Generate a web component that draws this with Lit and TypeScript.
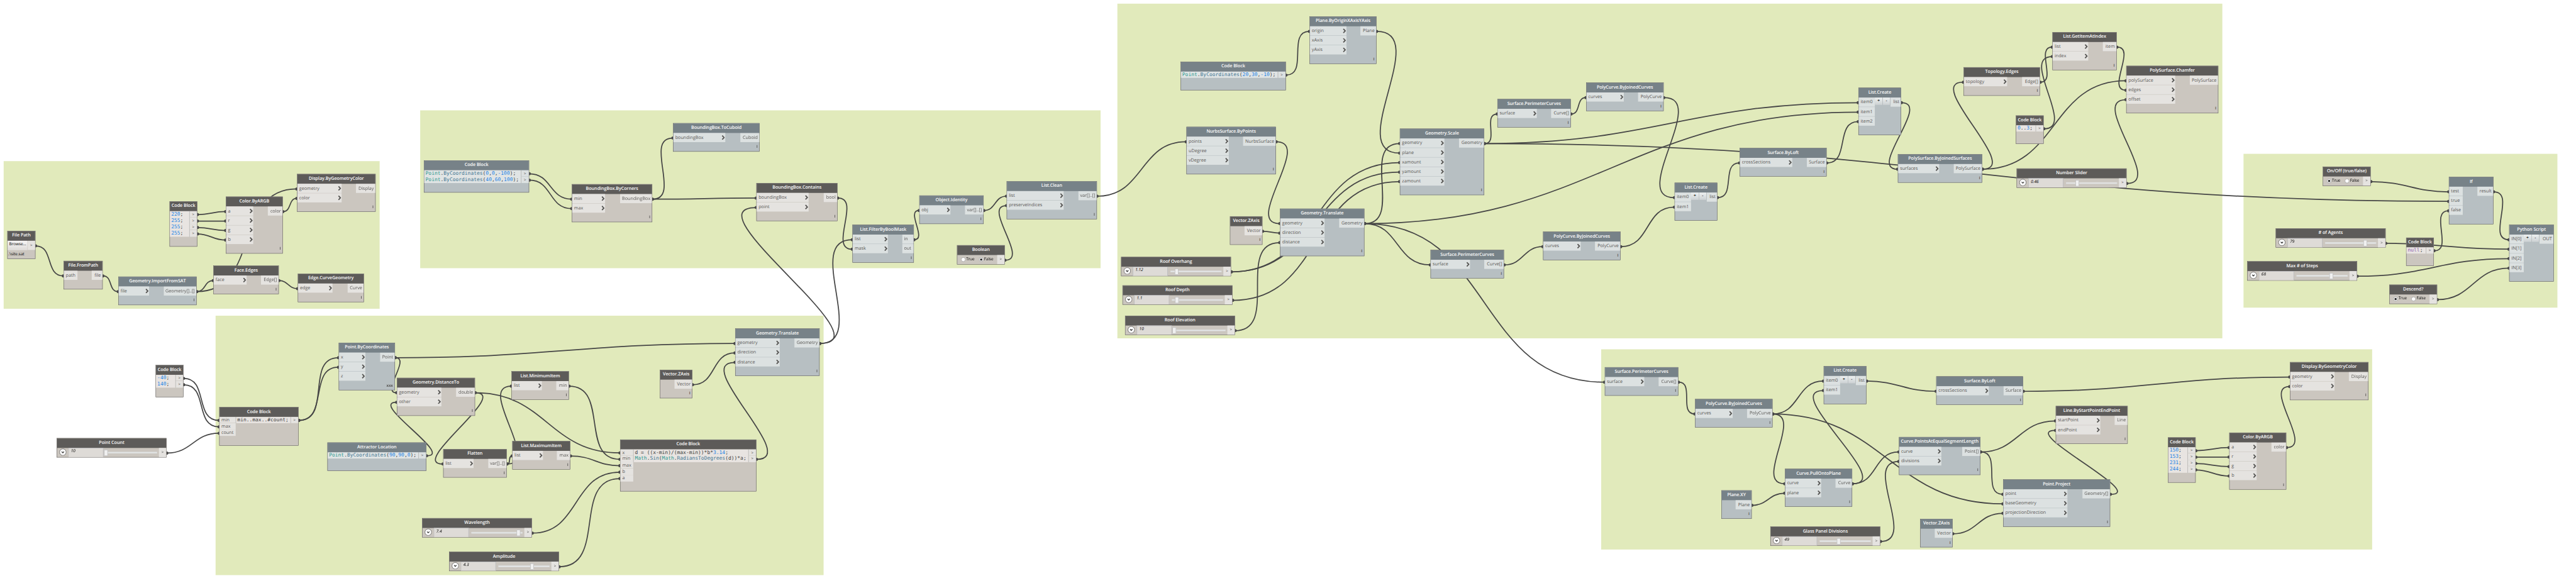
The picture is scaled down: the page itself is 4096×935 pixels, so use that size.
import { LitElement, html, svg, css, nothing, TemplateResult } from "lit";
import { customElement, property } from "lit/decorators.js";
import { classMap } from "lit/directives/class-map.js";
import { styleMap } from "lit/directives/style-map.js";

type Token = [kind: string, text: string];

interface GraphNode {
  id: string;
  kind: "function" | "code" | "slider" | "bool" | "file";
  title: string;
  x: number;
  y: number;
  w: number;
  h: number;
  blue?: boolean;
  ins?: string[];
  outs?: string[];
  inW?: number;
  outW?: number;
  plain?: boolean;
  variadic?: boolean;
  lacing?: string;
  lines?: Token[][];
  outCount?: number;
  value?: string;
  thumb?: number;
  on?: boolean;
}

const HEADER = 27;
const ROW = 26;
const CODE_ROW = 17.6;

/* ---------- node factories ---------- */

const fn = (
  id: string, title: string, x: number, y: number, right: number, blue: boolean,
  ins: string[], inW: number, outs: string[], outW: number, extra: Partial<GraphNode> = {},
): GraphNode => ({
  id, kind: "function", title, x, y, w: right - x,
  h: HEADER + ROW * Math.max(ins.length, outs.length) + 25,
  blue, ins, inW, outs, outW, lacing: "I", ...extra,
});

const code = (
  id: string, x: number, y: number, right: number, h: number, blue: boolean,
  lines: Token[][], extra: Partial<GraphNode> = {},
): GraphNode => ({
  id, kind: "code", title: "Code Block", x, y, w: right - x, h, blue, lines,
  outCount: lines.length, ...extra,
});

const slider = (id: string, title: string, x: number, y: number, value: string, thumb: number): GraphNode =>
  ({ id, kind: "slider", title, x, y, w: 301, h: 53, value, thumb });

const bool = (id: string, title: string, x: number, y: number, on: boolean): GraphNode =>
  ({ id, kind: "bool", title, x, y, w: 131, h: 53, on });

const num = (n: string): Token[] => [["num", n], ["op", ";"]];
const pointBy = (...coords: string[]): Token[] => {
  const out: Token[] = [["cls", "Point"], ["op", "."], ["fn", "ByCoordinates"], ["op", "("]];
  coords.forEach((c, i) => {
    if (i) out.push(["op", ","]);
    out.push(["num", c]);
  });
  out.push(["op", ");"]);
  return out;
};

const perimeter = (id: string, x: number, y: number) =>
  fn(id, "Surface.PerimeterCurves", x, y, x + 201, true, ["surface"], 107, ["Curve[]"], 53);
const polycurve = (id: string, x: number, y: number) =>
  fn(id, "PolyCurve.ByJoinedCurves", x, y, x + 212, true, ["curves"], 102, ["PolyCurve"], 69);
const listCreate = (id: string, x: number, y: number, n: number) =>
  fn(id, "List.Create", x, y, x + 117, true,
    Array.from({ length: n }, (_, i) => `item${i}`), 44.5, ["list"], 28,
    { plain: true, variadic: true, lacing: "" });
const loft = (id: string, x: number, y: number) =>
  fn(id, "Surface.ByLoft", x, y, x + 238, true, ["crossSections"], 143, ["Surface"], 53);
const translate = (id: string, x: number, y: number) =>
  fn(id, "Geometry.Translate", x, y, x + 231, true, ["geometry", "direction", "distance"], 121, ["Geometry"], 68);
const zAxis = (id: string, x: number, y: number, blue = false) =>
  fn(id, "Vector.ZAxis", x, y, x + 89, blue, [], 0, ["Vector"], 48);
const argb = (id: string, x: number, y: number) =>
  fn(id, "Color.ByARGB", x, y, x + 156, false, ["a", "r", "g", "b"], 74, ["color"], 40);
const display = (id: string, x: number, y: number) =>
  fn(id, "Display.ByGeometryColor", x, y, x + 215, false, ["geometry", "color"], 121, ["Display"], 53);

const GROUPS: [number, number, number, number][] = [
  [10, 441, 1039, 845],
  [1150, 302, 3012, 734],
  [590, 864, 2254, 1574],
  [3058, 10, 6082, 926],
  [6140, 421, 6999, 842],
  [4382, 956, 6492, 1504],
];

const NODES: GraphNode[] = [
  { id: "file", kind: "file", title: "File Path", x: 20, y: 632, w: 77, h: 77 },
  fn("fromPath", "File.FromPath", 174, 714, 281, false, ["path"], 37, ["file"], 29, { plain: true, lacing: "" }),
  fn("sat", "Geometry.ImportFromSAT", 324, 757, 538, true, ["file"], 83, ["Geometry[]..[]"], 89),
  code("argbA", 464, 551, 540, 124, false, [num("220"), num("255"), num("255"), num("255")]),
  argb("colorA", 618, 538),
  fn("faceEdges", "Face.Edges", 584, 727, 763, false, ["face"], 90, ["Edge[]"], 48),
  display("displayA", 813, 476),
  fn("edgeCurve", "Edge.CurveGeometry", 815, 749, 996, false, ["edge"], 94, ["Curve"], 44),

  code("range", 426, 999, 502, 88, false, [num("-40"), num("140")]),
  code("series", 600, 1114, 817, 106, false, [[["op", "min..max..#count;"]]], { ins: ["min", "max", "count"], inW: 44 }),
  slider("count", "Point Count", 155, 1199, "10", 130),

  code("corners", 1160, 439, 1448, 88, true, [pointBy("0", "0", "-100"), pointBy("40", "60", "100")]),
  fn("byCorners", "BoundingBox.ByCorners", 1565, 504, 1785, false, ["min", "max"], 90, ["BoundingBox"], 87),
  fn("cuboid", "BoundingBox.ToCuboid", 1842, 337, 2079, true, ["boundingBox"], 142, ["Cuboid"], 52),
  fn("contains", "BoundingBox.Contains", 2070, 501, 2292, false, ["boundingBox", "point"], 142, ["bool"], 37),
  fn("mask", "List.FilterByBoolMask", 2333, 615, 2501, true, ["list", "mask"], 96, ["in", "out"], 31),
  fn("identity", "Object.Identity", 2516, 535, 2692, true, ["obj"], 84, ["var[]..[]"], 50),
  fn("clean", "List.Clean", 2755, 496, 3002, true, ["list", "preserveIndices"], 155, ["var[]..[]"], 50),
  bool("boolean", "Boolean", 2619, 671, false),

  fn("point", "Point.ByCoordinates", 927, 938, 1081, true, ["x", "y", "z"], 72, ["Point"], 40, { lacing: "xxx" }),
  fn("distance", "Geometry.DistanceTo", 1086, 1034, 1300, false, ["geometry", "other"], 121, ["double"], 51),
  fn("minItem", "List.MinimumItem", 1400, 1016, 1557, false, ["list"], 82, ["min"], 34),
  code("attractor", 896, 1211, 1167, 78, true, [pointBy("90", "90", "0")], { title: "Attractor Location" }),
  fn("flatten", "Flatten", 1213, 1229, 1387, false, ["list"], 82, ["var[]..[]"], 50),
  fn("maxItem", "List.MaximumItem", 1402, 1207, 1561, false, ["list"], 83, ["max"], 36),
  slider("wavelength", "Wavelength", 1155, 1418, "7.4", 259),
  slider("amplitude", "Amplitude", 1229, 1510, "4.3", 222),
  translate("translateA", 2012, 899),
  zAxis("zA", 1806, 1012),
  code("wave", 1697, 1203, 2070, 142, false, [
    [["op", "d = ((x-min)/(max-min))*b*"], ["num", "3.14"], ["op", ";"]],
    [["cls", "Math"], ["op", "."], ["fn", "Sin"], ["op", "("], ["cls", "Math"], ["op", "."], ["fn", "RadiansToDegrees"], ["op", "(d))*a;"]],
  ], { ins: ["x", "min", "max", "b", "a"], inW: 35 }),

  fn("plane", "Plane.ByOriginXAxisYAxis", 3584, 45, 3767, true, ["origin", "xAxis", "yAxis"], 100, ["Plane"], 43),
  code("origin", 3231, 169, 3519, 78, true, [pointBy("20", "30", "-10")]),
  fn("nurbs", "NurbsSurface.ByPoints", 3247, 347, 3492, true, ["points", "uDegree", "vDegree"], 115, ["NurbsSurface"], 89),
  translate("translateB", 3503, 571),
  zAxis("zB", 3366, 592),
  slider("overhang", "Roof Overhang", 3068, 703, "1.12", 147),
  slider("depth", "Roof Depth", 3072, 781, "1.1", 144),
  slider("elevation", "Roof Elevation", 3079, 864, "10", 130),
  fn("scale", "Geometry.Scale", 3831, 352, 4062, true, ["geometry", "plane", "xamount", "yamount", "zamount"], 121, ["Geometry"], 68),
  perimeter("perimA", 4098, 271),
  polycurve("polyA", 4341, 226),
  perimeter("perimB", 3915, 684),
  polycurve("polyB", 4223, 634),
  listCreate("listA", 4583, 500, 2),
  listCreate("listB", 5086, 240, 3),
  loft("loftA", 4761, 405),
  fn("polySurface", "PolySurface.ByJoinedSurfaces", 5194, 422, 5425, true, ["surfaces"], 112, ["PolySurface"], 77),
  fn("topology", "Topology.Edges", 5374, 184, 5583, false, ["topology"], 118, ["Edge[]"], 48),
  fn("getItem", "List.GetItemAtIndex", 5617, 88, 5793, false, ["list", "index"], 97, ["item"], 37),
  fn("chamfer", "PolySurface.Chamfer", 5819, 180, 6071, false, ["polySurface", "edges", "offset"], 133, ["PolySurface"], 77),
  code("indices", 5517, 316, 5593, 78, false, [[["num", "0"], ["op", ".."], ["num", "3"], ["op", ";"]]]),
  slider("number", "Number Slider", 5519, 461, "0.46", 161),

  bool("onOff", "On/Off (true/false)", 6357, 456, true),
  fn("if", "If", 6702, 484, 6824, true, ["test", "true", "false"], 37, ["result"], 43, { plain: true, lacing: "" }),
  slider("agents", "# of Agents", 6228, 625, "79", 240),
  code("null", 6585, 650, 6661, 78, false, [[["kw", "null"], ["op", ";"]]]),
  slider("steps", "Max # of Steps", 6150, 715, "68", 225),
  bool("descend", "Descend?", 6539, 779, true),
  fn("python", "Python Script", 6867, 615, 6989, true, ["IN[0]", "IN[1]", "IN[2]", "IN[3]"], 40, ["OUT"], 38,
    { plain: true, variadic: true, lacing: "" }),

  perimeter("perimC", 4392, 1005),
  polycurve("polyC", 4639, 1092),
  listCreate("listC", 4991, 1002, 2),
  loft("loftB", 5299, 1030),
  fn("points", "Curve.PointsAtEqualSegmentLength", 5197, 1196, 5420, true, ["curve", "divisions"], 115, ["Point[]"], 49),
  fn("pull", "Curve.PullOntoPlane", 4885, 1283, 5069, true, ["curve", "plane"], 98, ["Curve"], 45),
  fn("planeXY", "Plane.XY", 4711, 1342, 4794, true, [], 0, ["Plane"], 43),
  slider("divisions", "Glass Panel Divisions", 4845, 1441, "49", 182),
  zAxis("zC", 5255, 1420, true),
  fn("line", "Line.ByStartPointEndPoint", 5626, 1111, 5823, false, ["startPoint", "endPoint"], 121, ["Line"], 35),
  fn("project", "Point.Project", 5482, 1312, 5775, true, ["point", "baseGeometry", "projectionDirection"], 175, ["Geometry[]"], 75),
  code("argbB", 5933, 1197, 6009, 124, false, [num("150"), num("153"), num("231"), num("244")]),
  argb("colorB", 6101, 1184),
  display("displayB", 6267, 991),
];

/* source, output index, target, input index */
const WIRES: [string, number, string, number][] = [
  ["file", 0, "fromPath", 0], ["fromPath", 0, "sat", 0], ["sat", 0, "faceEdges", 0], ["sat", 0, "displayA", 0],
  ["argbA", 0, "colorA", 0], ["argbA", 1, "colorA", 1], ["argbA", 2, "colorA", 2], ["argbA", 3, "colorA", 3],
  ["colorA", 0, "displayA", 1], ["faceEdges", 0, "edgeCurve", 0],
  ["range", 0, "series", 0], ["range", 1, "series", 1], ["count", 0, "series", 2],
  ["series", 0, "point", 0], ["series", 0, "point", 1],
  ["point", 0, "translateA", 0], ["point", 0, "distance", 0], ["attractor", 0, "distance", 1],
  ["distance", 0, "wave", 0], ["distance", 0, "flatten", 0], ["flatten", 0, "maxItem", 0], ["flatten", 0, "minItem", 0],
  ["minItem", 0, "wave", 1], ["maxItem", 0, "wave", 2], ["wavelength", 0, "wave", 3], ["amplitude", 0, "wave", 4],
  ["wave", 1, "translateA", 2], ["zA", 0, "translateA", 1], ["translateA", 0, "contains", 1], ["translateA", 0, "mask", 0],
  ["corners", 0, "byCorners", 0], ["corners", 1, "byCorners", 1], ["byCorners", 0, "cuboid", 0], ["byCorners", 0, "contains", 0],
  ["contains", 0, "mask", 1], ["mask", 0, "identity", 0], ["identity", 0, "clean", 0], ["boolean", 0, "clean", 1],
  ["clean", 0, "nurbs", 0],
  ["origin", 0, "plane", 0], ["plane", 0, "scale", 1], ["nurbs", 0, "translateB", 0], ["zB", 0, "translateB", 1],
  ["elevation", 0, "translateB", 2], ["overhang", 0, "scale", 2], ["overhang", 0, "scale", 3], ["depth", 0, "scale", 4],
  ["translateB", 0, "scale", 0], ["translateB", 0, "listB", 1], ["translateB", 0, "perimB", 0], ["translateB", 0, "perimC", 0],
  ["scale", 0, "perimA", 0], ["scale", 0, "listB", 0], ["scale", 0, "if", 1],
  ["perimA", 0, "polyA", 0], ["polyA", 0, "listA", 0], ["perimB", 0, "polyB", 0], ["polyB", 0, "listA", 1],
  ["listA", 0, "loftA", 0], ["loftA", 0, "listB", 2], ["listB", 0, "polySurface", 0],
  ["polySurface", 0, "topology", 0], ["polySurface", 0, "chamfer", 0], ["topology", 0, "getItem", 0],
  ["indices", 0, "getItem", 1], ["getItem", 0, "chamfer", 1], ["number", 0, "chamfer", 2],
  ["onOff", 0, "if", 0], ["null", 0, "if", 2], ["if", 0, "python", 0], ["agents", 0, "python", 1],
  ["steps", 0, "python", 2], ["descend", 0, "python", 3],
  ["perimC", 0, "polyC", 0], ["polyC", 0, "listC", 0], ["polyC", 0, "pull", 0], ["polyC", 0, "project", 1],
  ["pull", 0, "listC", 1], ["pull", 0, "points", 0], ["planeXY", 0, "pull", 1], ["divisions", 0, "points", 1],
  ["listC", 0, "loftB", 0], ["loftB", 0, "displayB", 0], ["points", 0, "line", 0], ["points", 0, "project", 0],
  ["zC", 0, "project", 2], ["project", 0, "line", 1],
  ["argbB", 0, "colorB", 0], ["argbB", 1, "colorB", 1], ["argbB", 2, "colorB", 2], ["argbB", 3, "colorB", 3],
  ["colorB", 0, "displayB", 1],
];

const byId = new Map(NODES.map((n) => [n.id, n]));
const portY = (n: GraphNode, i: number) =>
  n.kind === "code" ? n.y + 36.5 + CODE_ROW * i : n.y + 41 + ROW * i;

@customElement("graph-node")
class GraphNodeElement extends LitElement {
  @property({ attribute: false }) node!: GraphNode;

  static styles = css`
    :host { display: block; }
    .node {
      box-sizing: border-box; width: 100%; height: 100%;
      display: flex; flex-direction: column;
      border: 1.3px solid #5e5c5a;
      --body: #cbc6bf; --port: #e5e3e0; --head: #5d5b59; --edit: #e8e4e1;
      background: var(--body); color: #5a5856;
      font: 12.4px/23.6px "Open Sans", "Noto Sans", sans-serif;
      text-rendering: geometricPrecision;
      white-space: nowrap;
    }
    .node.blue { --body: #b7bfc2; --port: #dce1e1; --head: #778288; --edit: #e0e4e4; }
    .head {
      flex: none; height: 25.7px; background: var(--head); color: #fcfcfb;
      font-weight: 600; font-size: 12.4px; line-height: 22px; letter-spacing: -0.1px;
      display: flex; justify-content: center;
    }
    .body { flex: 1; min-height: 0; display: flex; justify-content: space-between; align-items: flex-start; }
    .col { display: flex; flex-direction: column; gap: 1px; }
    .port {
      box-sizing: border-box; height: 25px; background: var(--port);
      display: flex; justify-content: space-between; padding: 0 1px 0 5px;
    }
    .outs .port { padding-right: 4px; }
    .outs.single .port { justify-content: flex-end; }
    .chevron { width: 9px; height: 13px; margin-top: 6px; fill: none; stroke: #565553; stroke-width: 3.1; }
    .right { display: flex; }
    .step {
      box-sizing: border-box; width: 21.5px; height: 20px; text-align: center;
      border-right: 1px solid #adb2b3; background: linear-gradient(#edf0f0, #ccd1d3);
      color: #111; font-size: 11.5px; font-weight: 600; line-height: 17.5px;
    }
    .lacing { flex: none; align-self: flex-end; height: 20px; padding-right: 4.5px; font-weight: 700; font-size: 10.4px; line-height: 17px; }

    .code-body { flex: 1; display: flex; align-items: flex-start; min-height: 0; }
    .code-ins, .code-outs { display: flex; flex-direction: column; }
    .cport { box-sizing: border-box; height: 17.6px; background: var(--port); padding-left: 5px; line-height: 15.5px; }
    .cport.ruled { border-bottom: 1px solid var(--body); }
    .cport.out { border-left: 1px solid #a9a8a5; width: 21px; padding: 0; text-align: center; line-height: 17.4px; }
    .editor {
      flex: 1; min-width: 0; box-sizing: border-box; background: var(--edit); padding-left: 3.5px;
      font: 13.7px/16.6px "DejaVu Sans Mono", monospace; color: #3d3d3c;
    }
    .editor.after { border-left: 1px solid #a9a8a5; }
    .src { height: 16.6px; padding-bottom: 1px; white-space: pre; }
    .num { color: #2585e5; }
    .cls { color: #2e998f; }
    .fn { color: #417693; }
    .kw { color: #8e5fae; }
    .arrow { font-size: 10.8px; color: #4a4a49; }

    .row { flex: 1; min-height: 0; display: flex; align-items: stretch; color: #000; }
    .out-cell { flex: none; width: 20px; background: var(--port); text-align: center; line-height: 23.6px; }
    .toggle { flex: none; width: 20px; height: 20px; margin: 1px 5px 0 6px; }
    .value {
      flex: none; box-sizing: border-box; width: 95.5px; border: 1px solid #abadb3; border-bottom: 0;
      background: #dedbd7; padding-left: 6px; font-size: 11.3px; font-style: italic; line-height: 15.8px;
    }
    .track { flex: 1; display: flex; align-items: center; padding: 2px 5px 0 7px; }
    .rail { box-sizing: border-box; width: 100%; height: 4px; background: #e7eaea; border: 1px solid #d6d6d6; }
    .thumb {
      position: relative; box-sizing: border-box; flex: none; width: 10.5px; height: 17.5px;
      margin-left: -10.5px; background: #f0f0f0; border: 1px solid #acacac;
    }
    .choice { flex: 1; display: flex; align-items: center; gap: 1.5px; padding-left: 10px; font-size: 11.2px; letter-spacing: -0.25px; }
    .choice .label { line-height: 18px; height: 21px; }
    .choice .label.gap { margin-right: 11px; }
    .radio { width: 12.5px; height: 12.5px; }
    .browse {
      box-sizing: border-box; width: 54px; height: 26px; padding-left: 4px; color: #000;
      background: linear-gradient(#f6f5f5, #dddad7); font-size: 11.2px; line-height: 17.5px; letter-spacing: -0.15px;
    }
    .file-port { width: 20.5px; height: 25px; background: var(--port); text-align: center; }
    .path { flex: none; height: 24px; padding-left: 2px; color: #000; font-size: 11.3px; line-height: 22px; letter-spacing: -0.1px; }
  `;

  private chevron() {
    return html`<svg class="chevron" viewBox="0 0 9 13"><path d="M1.4 1 L6.6 6.5 L1.4 12"></path></svg>`;
  }

  private functionBody(n: GraphNode): TemplateResult {
    const outs = n.outs ?? [];
    return html`
      <div class="body">
        <div class="col" style=${styleMap({ width: `${n.inW}px` })}>
          ${(n.ins ?? []).map((p) => html`<div class="port"><span>${p}</span>${n.plain ? nothing : this.chevron()}</div>`)}
        </div>
        <div class="right">
          ${n.variadic ? html`<div class="step">+</div><div class="step">-</div>` : nothing}
          <div class=${classMap({ col: true, outs: true, single: outs.length === 1 })} style=${styleMap({ width: `${n.outW}px` })}>
            ${outs.map((p) => html`<div class="port"><span>${p}</span></div>`)}
          </div>
        </div>
      </div>
      ${n.lacing ? html`<div class="lacing">${n.lacing}</div>` : nothing}`;
  }

  private codeBody(n: GraphNode): TemplateResult {
    const ins = n.ins ?? [];
    const ruled = (i: number, total: number) => i % 2 === 0 && i < total - 1;
    const outs = n.outCount ?? 1;
    return html`
      <div class="code-body">
        ${ins.length
          ? html`<div class="code-ins" style=${styleMap({ width: `${n.inW}px` })}>
              ${ins.map((p, i) => html`<div class=${classMap({ cport: true, ruled: ruled(i, ins.length) })}>${p}</div>`)}
            </div>`
          : nothing}
        <div class=${classMap({ editor: true, after: ins.length > 0 })}>
          ${(n.lines ?? []).map((l) => html`<div class="src">${l.map(([k, t]) => html`<span class=${k}>${t}</span>`)}</div>`)}
        </div>
        <div class="code-outs">
          ${Array.from({ length: outs }, (_, i) => html`<div class=${classMap({ cport: true, out: true, arrow: true, ruled: ruled(i, outs) })}>&gt;</div>`)}
        </div>
      </div>`;
  }

  private sliderBody(n: GraphNode): TemplateResult {
    /* distance of the thumb from the right end of the rail */
    const left = (n.thumb ?? 130) - 265;
    return html`
      <div class="row">
        <svg class="toggle" viewBox="0 0 20 20">
          <circle cx="10" cy="10.5" r="9" fill="#fff" stroke="#4b4a49" stroke-width="1.2"></circle>
          <path d="M6.8 9 L10 12.2 L13.2 9" fill="none" stroke="#333" stroke-width="2.2"></path>
        </svg>
        <div class="value">${n.value}</div>
        <div class="track">
          <div class="rail"></div>
          <div class="thumb" style=${styleMap({ left: `${left}px` })}></div>
        </div>
        <div class="out-cell arrow">&gt;</div>
      </div>`;
  }

  private radio(on: boolean) {
    return html`<svg class="radio" viewBox="0 0 12 12">
      <circle cx="6" cy="6" r="5.4" fill="#fff" stroke="#8b8b8b" stroke-width="1"></circle>
      ${on ? svg`<circle cx="6" cy="6" r="2.9" fill="#222"></circle>` : nothing}
    </svg>`;
  }

  private boolBody(n: GraphNode): TemplateResult {
    return html`
      <div class="row">
        <div class="choice">
          ${this.radio(!!n.on)}<span class="label gap">True</span>
          ${this.radio(!n.on)}<span class="label">False</span>
        </div>
        <div class="out-cell arrow">&gt;</div>
      </div>`;
  }

  private fileBody(): TemplateResult {
    return html`
      <div class="body">
        <div class="browse">Browse...</div>
        <div class="file-port arrow">&gt;</div>
      </div>
      <div class="path">.\\site.sat</div>`;
  }

  render() {
    const n = this.node;
    const body =
      n.kind === "function" ? this.functionBody(n)
      : n.kind === "code" ? this.codeBody(n)
      : n.kind === "slider" ? this.sliderBody(n)
      : n.kind === "bool" ? this.boolBody(n)
      : this.fileBody();
    return html`<div class=${classMap({ node: true, blue: !!n.blue })}>
      <div class="head"><span>${n.title}</span></div>
      ${body}
    </div>`;
  }
}

@customElement("app-root")
class AppRoot extends LitElement {
  static styles = css`
    :host { display: block; width: 4096px; height: 935px; overflow: hidden; background: #fff; }
    .canvas { position: relative; width: 7050px; height: 1610px; transform: scale(0.581); transform-origin: 0 0; }
    .group { position: absolute; background: #e1eabb; }
    .wires { position: absolute; inset: 0; width: 7050px; height: 1610px; }
    .wires path { fill: none; stroke: #464646; stroke-width: 3; }
    .wires circle { fill: #464646; }
    graph-node { position: absolute; }
  `;

  private wire([from, out, to, inp]: [string, number, string, number]) {
    const a = byId.get(from)!;
    const b = byId.get(to)!;
    const x0 = a.x + a.w + 1, y0 = portY(a, out);
    const x1 = b.x - 1, y1 = portY(b, inp);
    const reach = 0.45 * Math.hypot(x1 - x0, y1 - y0);
    return svg`
      <path d="M${x0} ${y0} C${x0 + reach} ${y0} ${x1 - reach} ${y1} ${x1} ${y1}"></path>
      <circle cx=${x0 - 0.5} cy=${y0} r="4.3"></circle>
      <circle cx=${x1 + 0.5} cy=${y1} r="4.3"></circle>`;
  }

  render() {
    return html`<div class="canvas">
      ${GROUPS.map(([l, t, r, b]) => html`<div class="group"
        style=${styleMap({ left: `${l}px`, top: `${t}px`, width: `${r - l}px`, height: `${b - t}px` })}></div>`)}
      <svg class="wires" viewBox="0 0 7050 1610">${WIRES.map((w) => this.wire(w))}</svg>
      ${NODES.map((n) => html`<graph-node .node=${n}
        style=${styleMap({ left: `${n.x}px`, top: `${n.y}px`, width: `${n.w}px`, height: `${n.h}px` })}></graph-node>`)}
    </div>`;
  }
}
